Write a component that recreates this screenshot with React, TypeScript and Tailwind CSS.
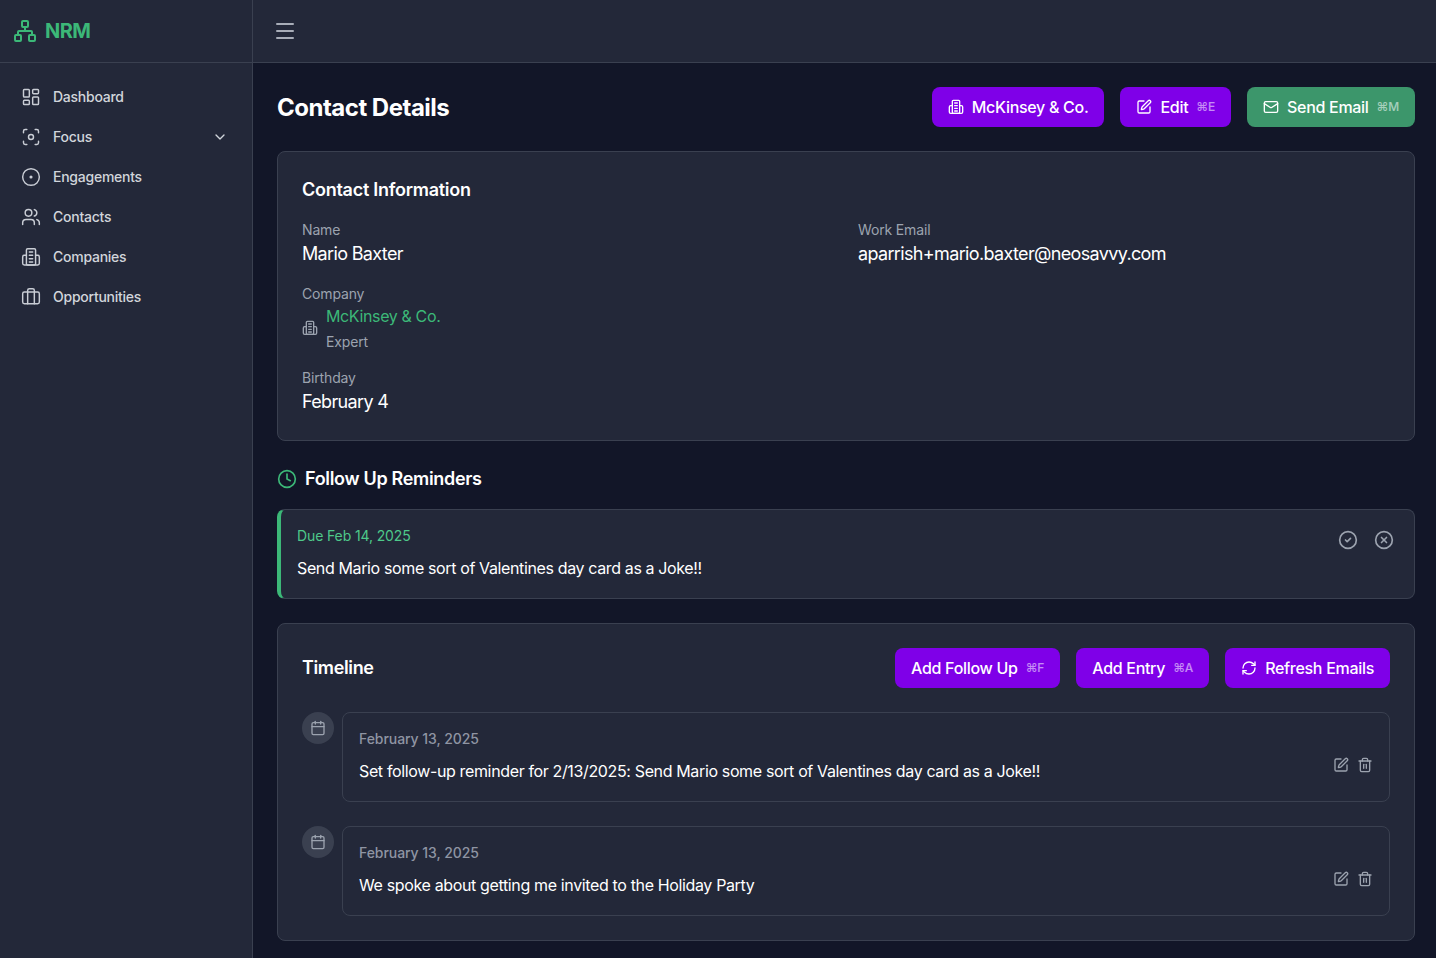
import {
  Network,
  Menu,
  LayoutDashboard,
  Focus,
  ChevronDown,
  CircleDot,
  Users,
  Briefcase,
  SquarePen,
  Mail,
  Clock,
  CircleCheck,
  CircleX,
  RefreshCw,
  Calendar,
  Trash2,
} from "lucide-react";
import type { ReactNode } from "react";

const CompanyIcon = ({ size = 16, strokeWidth = 2, className = "" }: { size?: number; strokeWidth?: number; className?: string }) => (
  <svg
    width={size}
    height={size}
    viewBox="0 0 24 24"
    fill="none"
    stroke="currentColor"
    strokeWidth={strokeWidth}
    strokeLinecap="round"
    strokeLinejoin="round"
    className={className}
  >
    <rect x="6.5" y="2" width="11" height="19.5" rx="1.5" />
    <path d="M6.5 10H4a2 2 0 0 0-2 2v7.5a2 2 0 0 0 2 2h16a2 2 0 0 0 2-2V12a2 2 0 0 0-2-2h-2.5" />
    <path d="M10 6h4M10 10h4M10 14h4M10 18h4" />
  </svg>
);

const nav = [
  { label: "Dashboard", icon: LayoutDashboard },
  { label: "Focus", icon: Focus, chevron: true },
  { label: "Engagements", icon: CircleDot },
  { label: "Contacts", icon: Users },
  { label: "Companies", icon: CompanyIcon },
  { label: "Opportunities", icon: Briefcase },
];

const entries = [
  "Set follow-up reminder for 2/13/2025: Send Mario some sort of Valentines day card as a Joke!!",
  "We spoke about getting me invited to the Holiday Party",
];

const Btn = ({
  children,
  icon,
  kbd,
  green,
}: {
  children: ReactNode;
  icon?: ReactNode;
  kbd?: string;
  green?: boolean;
}) => (
  <button
    className={`flex h-10 items-center gap-2 rounded-lg px-4 text-base font-medium tracking-[-0.3px] text-white ${
      green ? "bg-[#3c966b]" : "bg-[#7f00e8]"
    }`}
  >
    {icon}
    <span>{children}</span>
    {kbd && <span className="text-xs font-medium tracking-[-0.2px] text-white/55">{kbd}</span>}
  </button>
);

const Label = ({ children }: { children: ReactNode }) => (
  <div className="text-sm leading-5 tracking-[-0.15px] text-[#9ca3af]">{children}</div>
);

const Value = ({ children }: { children: ReactNode }) => (
  <div className="text-lg leading-7 tracking-[-0.65px] text-white">{children}</div>
);

export default function App() {
  return (
    <div className="flex h-screen overflow-hidden bg-[#121628] font-['Inter',sans-serif] text-white">
      <aside className="w-[253px] shrink-0 border-r border-[#3a4050] bg-[#232839]">
        <div className="flex h-[63px] items-center gap-2 border-b border-[#3a4050] pl-[13px]">
          <Network size={24} className="text-[#3cb878]" />
          <span className="text-xl font-bold tracking-[-0.6px] text-[#3cb878]">NRM</span>
        </div>
        <nav className="pt-[14px]">
          {nav.map((item) => (
            <div
              key={item.label}
              className="flex h-10 items-center gap-3 pr-6 pl-[21px] text-sm font-medium tracking-[-0.25px] text-[#d1d5db]"
            >
              <item.icon size={20} strokeWidth={1.75} className="text-[#c9cdd5]" />
              <span className="flex-1">{item.label}</span>
              {item.chevron && <ChevronDown size={16} />}
            </div>
          ))}
        </nav>
      </aside>

      <div className="flex min-w-0 flex-1 flex-col">
        <header className="flex h-[63px] shrink-0 items-center border-b border-[#3a4050] bg-[#232839] pl-5">
          <Menu size={24} strokeWidth={2} className="text-[#a8adb8]" />
        </header>

        <main className="flex-1 pt-6 pr-[21px] pl-6">
          <div className="mb-6 flex h-10 items-center justify-between">
            <h1 className="pt-0.5 text-2xl font-bold tracking-[-0.5px]">Contact Details</h1>
            <div className="flex gap-4">
              <Btn icon={<CompanyIcon size={16} />}>
                <span className="tracking-[-0.3px]">McKinsey &amp; Co.</span>
              </Btn>
              <Btn icon={<SquarePen size={16} />} kbd="⌘E">
                Edit
              </Btn>
              <Btn green icon={<Mail size={16} />} kbd="⌘M">
                Send Email
              </Btn>
            </div>
          </div>

          <section className="rounded-lg border border-[#3a4050] bg-[#232839] p-6">
            <h2 className="mb-4 text-lg font-semibold tracking-[-0.27px]">Contact Information</h2>
            <div className="grid grid-cols-2 gap-x-6">
              <div className="flex flex-col gap-4">
                <div>
                  <Label>Name</Label>
                  <Value>Mario Baxter</Value>
                </div>
                <div>
                  <Label>Company</Label>
                  <div className="flex items-center gap-2">
                    <CompanyIcon size={16} strokeWidth={2} className="text-[#9ca3af]" />
                    <div>
                      <div className="text-base tracking-[-0.37px] text-[#3cb878]">McKinsey &amp; Co.</div>
                      <div className="mt-1 text-sm tracking-[-0.15px] text-[#9ca3af]">Expert</div>
                    </div>
                  </div>
                </div>
                <div>
                  <Label>Birthday</Label>
                  <Value>February 4</Value>
                </div>
              </div>
              <div>
                <Label>Work Email</Label>
                <Value>aparrish+mario.baxter@neosavvy.com</Value>
              </div>
            </div>
          </section>

          <div className="mt-6 mb-4 flex h-7 items-center gap-2">
            <Clock size={20} className="text-[#3cb878]" />
            <h2 className="text-lg font-semibold tracking-[-0.32px]">Follow Up Reminders</h2>
          </div>

          <section className="flex items-start justify-between rounded-lg border border-l-4 border-[#3a4050] border-l-[#3cb878] bg-[#232839] pt-4 pr-5 pb-[18px] pl-4">
            <div>
              <div className="text-sm leading-5 tracking-[-0.12px] text-[#4ec98a]">Due Feb 14, 2025</div>
              <div className="mt-[10px] text-base tracking-[-0.37px]">
                Send Mario some sort of Valentines day card as a Joke!!
              </div>
            </div>
            <div className="mt-1 flex gap-4 text-[#9ca3af]">
              <CircleCheck size={20} strokeWidth={2} />
              <CircleX size={20} strokeWidth={2} />
            </div>
          </section>

          <section className="mt-6 rounded-lg border border-[#3a4050] bg-[#232839] p-6">
            <div className="mb-6 flex h-10 items-center justify-between">
              <h2 className="text-lg font-semibold tracking-[-0.37px]">Timeline</h2>
              <div className="flex gap-4">
                <Btn kbd="⌘F">Add Follow Up</Btn>
                <Btn kbd="⌘A">Add Entry</Btn>
                <Btn icon={<RefreshCw size={16} />}>Refresh Emails</Btn>
              </div>
            </div>
            <div className="flex flex-col gap-6">
              {entries.map((text) => (
                <div key={text} className="flex items-start gap-2">
                  <div className="flex h-8 w-8 shrink-0 items-center justify-center rounded-full bg-[#3a4050] text-[#9ca3af]">
                    <Calendar size={16} strokeWidth={2} />
                  </div>
                  <div className="flex flex-1 items-start justify-between rounded-lg border border-[#3a4050] pt-4 pr-4 pb-[18px] pl-4">
                    <div>
                      <div className="text-sm leading-5 font-medium tracking-[-0.06px] text-[#8f95a3]">
                        February 13, 2025
                      </div>
                      <div className="mt-[10px] text-base tracking-[-0.36px]">{text}</div>
                    </div>
                    <div className="mt-[28px] flex gap-2 text-[#9ca3af]">
                      <SquarePen size={16} strokeWidth={2} />
                      <Trash2 size={16} strokeWidth={2} />
                    </div>
                  </div>
                </div>
              ))}
            </div>
          </section>
        </main>
      </div>
    </div>
  );
}
